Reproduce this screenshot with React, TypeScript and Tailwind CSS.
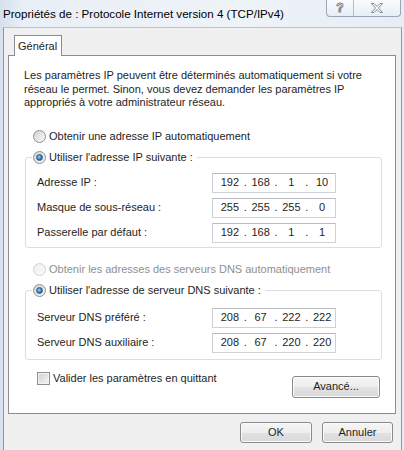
import React from 'react';

const font = "font-['Liberation_Sans','Noto_Sans',sans-serif]";

const Radio = ({ checked = false, disabled = false }: { checked?: boolean; disabled?: boolean }) => (
  <span
    className={`flex h-[13px] w-[13px] shrink-0 items-center justify-center rounded-full border ${
      disabled
        ? 'border-[#d3d3d3] bg-[linear-gradient(135deg,#eeeeee,#fafafa)]'
        : 'border-[#8e8f8f] bg-[linear-gradient(135deg,#d4d4d4,#f8f8f8)]'
    }`}
  >
    {checked && (
      <span className="h-[7px] w-[7px] rounded-full border border-[#2c628b] bg-[radial-gradient(circle_at_40%_40%,#9fd0f5,#2a74b5_60%,#1b4f80)]" />
    )}
  </span>
);

const IpField = ({ parts }: { parts: string[] }) => (
  <div className="flex h-[20px] w-[124px] items-center border border-[#cdd2d8] border-t-[#b7bcc2] bg-white pl-[4px] text-[11px] text-[#1e1e1e]">
    {parts.map((p, i) => (
      <React.Fragment key={i}>
        <span className="w-[26px] text-center">{p}</span>
        {i < 3 && <span className="w-[5px] text-center">.</span>}
      </React.Fragment>
    ))}
  </div>
);

const Row = ({ label, parts }: { label: string; parts: string[] }) => (
  <div className="flex h-[20px] items-center">
    <span className="w-[175px]">{label}</span>
    <IpField parts={parts} />
  </div>
);

const WinButton = ({ children, className = '' }: { children: React.ReactNode; className?: string }) => (
  <button
    className={`flex items-center justify-center rounded-[3px] border border-[#8a8a8a] bg-[linear-gradient(#f5f5f5_0%,#eeeeee_50%,#e2e2e2_50%,#d9d9d9_100%)] text-[11px] text-[#1e1e1e] shadow-[inset_0_0_0_1px_#fbfbfb] ${className}`}
  >
    {children}
  </button>
);

export default function App() {
  return (
    <div
      className={`flex h-[450px] w-[404px] flex-col overflow-hidden bg-[linear-gradient(90deg,#d5e1ee_0%,#e9eff6_6%,#eef3f8_60%,#e6edf5_100%)] ${font} text-[11px] text-[#1e1e1e]`}
    >
      {/* title bar */}
      <div className="relative h-[27px] shrink-0">
        <div className="pl-[3px] pt-[5px] text-[11.6px] leading-[18px] text-black">
          Propriétés de : Protocole Internet version 4 (TCP/IPv4)
        </div>
        <div className="absolute right-[3px] top-0 flex h-[17px] w-[75px] overflow-hidden rounded-b-[4px] border border-t-0 border-[#9aa6b3] bg-[linear-gradient(#fafcfe,#e6edf4)]">
          <div className="flex w-[27px] items-center justify-center border-r border-[#b3bec9] text-[12px] font-bold leading-none text-white [-webkit-text-stroke:1px_#7a8796]">
            ?
          </div>
          <div className="flex flex-1 items-center justify-center">
            <svg width="12" height="10" viewBox="0 0 12 10">
              <polygon
                points="0.5,0.5 3,0.5 6,3.5 9,0.5 11.5,0.5 7.5,5 11.5,9.5 9,9.5 6,6.5 3,9.5 0.5,9.5 4.5,5"
                fill="#ffffff"
                stroke="#7c8998"
                strokeWidth="1"
              />
            </svg>
          </div>
        </div>
      </div>

      {/* dialog body */}
      <div className="ml-[3px] mr-[2px] flex flex-1 flex-col border-x border-t border-x-[#8d949c] border-t-[#b9c3cd] bg-[#f0f0f0] pt-[7px]">
        <div className="ml-[10px] relative z-10 -mb-px h-[21px] w-[48px] border border-b-0 border-[#898c95] bg-white pl-[3px] pt-[2px] leading-[16px]">
          Général
        </div>

        <div className="ml-[4px] flex h-[359px] w-[388px] flex-col border border-[#898c95] bg-white">
          <p className="ml-[15px] mt-[13px] leading-[13.5px]">
            Les paramètres IP peuvent être déterminés automatiquement si votre
            <br />
            réseau le permet. Sinon, vous devez demander les paramètres IP
            <br />
            appropriés à votre administrateur réseau.
          </p>

          <label className="ml-[24px] mt-[19px] flex h-[16px] items-center gap-[3px]">
            <Radio />
            <span>Obtenir une adresse IP automatiquement</span>
          </label>

          <fieldset className="ml-[16px] mt-[5px] w-[357px] rounded-[3px] border border-[#d5dfe5] pb-[4px] pl-[11px]">
            <legend className="-ml-[5px] flex h-[16px] items-center gap-[3px] pl-px pr-[4px]">
              <Radio checked />
              <span>Utiliser l'adresse IP suivante :</span>
            </legend>
            <div className="flex flex-col gap-[5px] pt-[7px]">
              <Row label="Adresse IP :" parts={['192', '168', '1', '10']} />
              <Row label="Masque de sous-réseau :" parts={['255', '255', '255', '0']} />
              <Row label="Passerelle par défaut :" parts={['192', '168', '1', '1']} />
            </div>
          </fieldset>

          <label className="ml-[24px] mt-[14px] flex h-[16px] items-center gap-[3px] text-[#8f8f8f]">
            <Radio disabled />
            <span>Obtenir les adresses des serveurs DNS automatiquement</span>
          </label>

          <fieldset className="ml-[16px] mt-[5px] w-[357px] rounded-[3px] border border-[#d5dfe5] pb-[6px] pl-[11px]">
            <legend className="-ml-[5px] flex h-[16px] items-center gap-[3px] pl-px pr-[4px]">
              <Radio checked />
              <span>Utiliser l'adresse de serveur DNS suivante :</span>
            </legend>
            <div className="flex flex-col gap-[5px] pt-[9px]">
              <Row label="Serveur DNS préféré :" parts={['208', '67', '222', '222']} />
              <Row label="Serveur DNS auxiliaire :" parts={['208', '67', '220', '220']} />
            </div>
          </fieldset>

          <div className="ml-[28px] mr-[15px] mt-[11px] flex items-start">
            <label className="flex h-[16px] items-center gap-[3px]">
              <span className="h-[13px] w-[13px] border border-[#8e8f8f] bg-[linear-gradient(135deg,#cfcfcf,#f6f6f6)] shadow-[inset_0_0_0_1px_#f4f4f4]" />
              <span>Valider les paramètres en quittant</span>
            </label>
            <WinButton className="ml-auto mt-[5px] h-[22px] w-[88px]">Avancé...</WinButton>
          </div>
        </div>

        <div className="mt-[8px] flex justify-end gap-[10px] pr-[8px]">
          <WinButton className="h-[21px] w-[72px]">OK</WinButton>
          <WinButton className="h-[21px] w-[71px]">Annuler</WinButton>
        </div>
      </div>
    </div>
  );
}
